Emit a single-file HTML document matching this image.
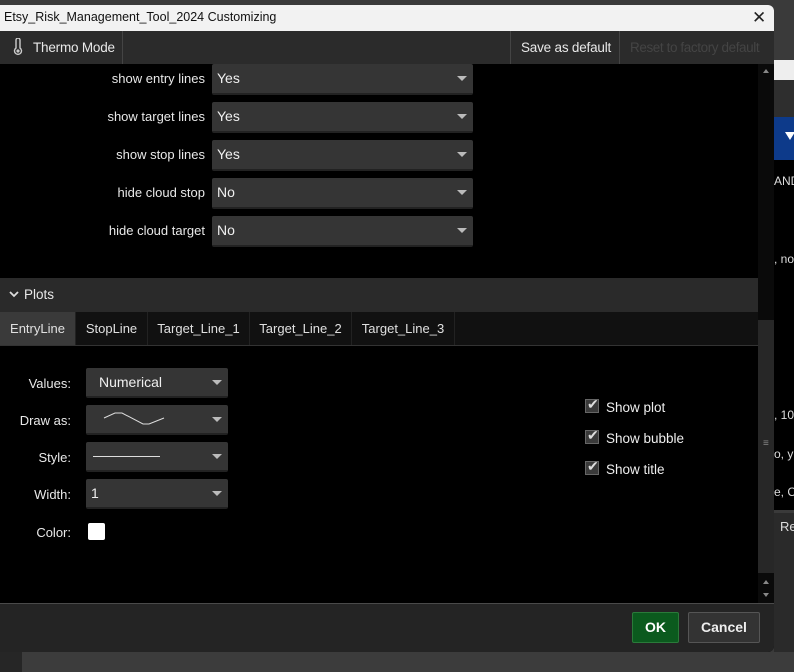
<!DOCTYPE html>
<html><head><style>
*{margin:0;padding:0;box-sizing:border-box}
body{width:794px;height:672px;overflow:hidden;background:#3a3a3a;font-family:"Liberation Sans",Arial,sans-serif;font-size:13px;color:#e8e8e8;position:relative}
.a{position:absolute;white-space:nowrap}
.dd{position:absolute;background:#353535;border-bottom:2px solid #222;border-radius:2px;color:#f0f0f0;font-size:14px;line-height:29px;padding-left:5px}
.dd:after{content:"";position:absolute;right:6px;top:12px;border-left:5px solid transparent;border-right:5px solid transparent;border-top:5px solid #bbb}
.lbl{position:absolute;text-align:right;font-size:13px;color:#e8e8e8}
.tab{position:absolute;top:312px;height:33px;line-height:33px;text-align:center;background:#111;color:#e0e0e0;font-size:13px;border-right:1px solid #222}
.cb{position:absolute;left:585px;width:14px;height:14px;background:#3a3a3a;border:1px solid #666}
.cb:after{content:"✔";position:absolute;left:1px;top:-4px;font-size:14px;color:#ddd}
.ct{position:absolute;left:606px;font-size:13.5px;color:#eee}
</style></head><body>
<div class="a" style="left:774px;top:0;width:20px;height:60px;background:#3a3a3a"></div>
<div class="a" style="left:774px;top:60px;width:20px;height:20px;background:#eee"></div>
<div class="a" style="left:774px;top:80px;width:20px;height:37px;background:#2e2e2e"></div>
<div class="a" style="left:774px;top:117px;width:20px;height:43px;background:#0d3a8a"></div>
<div class="a" style="left:785px;top:132px;border-left:5px solid transparent;border-right:5px solid transparent;border-top:8px solid #fff"></div>
<div class="a" style="left:774px;top:160px;width:20px;height:350px;background:#000;overflow:hidden"></div>
<div class="a" style="left:774px;top:174px;width:20px;overflow:hidden;color:#ddd;font-size:12px">AND</div>
<div class="a" style="left:774px;top:252px;width:20px;overflow:hidden;color:#ddd;font-size:12px">, no</div>
<div class="a" style="left:774px;top:408px;width:20px;overflow:hidden;color:#ddd;font-size:12px">, 10</div>
<div class="a" style="left:774px;top:447px;width:20px;overflow:hidden;color:#ddd;font-size:12px">o, y</div>
<div class="a" style="left:774px;top:485px;width:20px;overflow:hidden;color:#ddd;font-size:12px">e, C</div>
<div class="a" style="left:774px;top:513px;width:20px;height:28px;background:#2a2a2a;color:#ddd;font-size:13px;line-height:28px;padding-left:6px;overflow:hidden">Re</div>
<div class="a" style="left:774px;top:541px;width:20px;height:111px;background:#2a2a2a"></div>
<div class="a" style="left:0;top:652px;width:794px;height:20px;background:#3c3c3c"></div>
<div class="a" style="left:0;top:652px;width:22px;height:20px;background:#262626"></div>

<div class="a" style="left:0;top:5px;width:774px;height:647px;background:#000;border-radius:0 6px 6px 0;overflow:hidden">
 <div class="a" style="left:0;top:0;width:774px;height:26px;background:#f2f2f2;color:#111;font-size:12.5px;line-height:25px;padding-left:4px">Etsy_Risk_Management_Tool_2024 Customizing</div>
 <div class="a" style="left:752px;top:3px;color:#222;font-size:17px">✕</div>
 <div class="a" style="left:0;top:26px;width:774px;height:33px;background:#2b2b2b"></div>
 <div class="a" style="left:122px;top:26px;width:1px;height:33px;background:#444"></div>
 <div class="a" style="left:510px;top:26px;width:1px;height:33px;background:#444"></div>
 <div class="a" style="left:619px;top:26px;width:1px;height:33px;background:#444"></div>
 <svg class="a" style="left:13px;top:33px" width="10" height="18" viewBox="0 0 10 18"><path d="M3 2a2 2 0 0 1 4 0v8a3.5 3.5 0 1 1-4 0z" fill="none" stroke="#ccc" stroke-width="1.4"/><circle cx="5" cy="13" r="1.6" fill="#ccc"/></svg>
 <div class="a" style="left:33px;top:35px;font-size:13.5px;letter-spacing:-0.2px;color:#e8e8e8">Thermo Mode</div>
 <div class="a" style="left:521px;top:35px;font-size:13.5px;letter-spacing:-0.2px;color:#e8e8e8">Save as default</div>
 <div class="a" style="left:630px;top:35px;font-size:13.5px;letter-spacing:-0.4px;color:#444">Reset to factory default</div>

 <div class="lbl" style="left:0;width:205px;top:66px">show entry lines</div>
 <div class="dd" style="left:212px;top:59px;width:261px;height:31px">Yes</div>
 <div class="lbl" style="left:0;width:205px;top:104px">show target lines</div>
 <div class="dd" style="left:212px;top:97px;width:261px;height:31px">Yes</div>
 <div class="lbl" style="left:0;width:205px;top:142px">show stop lines</div>
 <div class="dd" style="left:212px;top:135px;width:261px;height:31px">Yes</div>
 <div class="lbl" style="left:0;width:205px;top:180px">hide cloud stop</div>
 <div class="dd" style="left:212px;top:173px;width:261px;height:31px">No</div>
 <div class="lbl" style="left:0;width:205px;top:218px">hide cloud target</div>
 <div class="dd" style="left:212px;top:211px;width:261px;height:31px">No</div>

 <div class="a" style="left:0;top:273px;width:758px;height:34px;background:#2a2a2a"></div>
 <svg class="a" style="left:9px;top:286px" width="10" height="8"><path d="M1 1l4 4 4-4" fill="none" stroke="#ddd" stroke-width="1.8"/></svg>
 <div class="a" style="left:24px;top:282px;font-size:13.5px;color:#e8e8e8">Plots</div>

 <div class="a" style="left:0;top:307px;width:758px;height:34px;background:#111;border-bottom:1px solid #333"></div>
</div>
<div class="tab" style="left:0;width:76px;background:#3a3a3a">EntryLine</div>
<div class="tab" style="left:76px;width:72px">StopLine</div>
<div class="tab" style="left:148px;width:102px">Target_Line_1</div>
<div class="tab" style="left:250px;width:102px">Target_Line_2</div>
<div class="tab" style="left:352px;width:103px">Target_Line_3</div>

<div class="lbl" style="left:0;width:71px;top:376px">Values:</div>
<div class="dd" style="left:86px;top:368px;width:142px;height:30px;padding-left:13px;line-height:28px">Numerical</div>
<div class="lbl" style="left:0;width:71px;top:413px">Draw as:</div>
<div class="dd" style="left:86px;top:405px;width:142px;height:30px"><svg class="a" style="left:17px;top:6px" width="64" height="16"><path d="M1 7L12 2H19L40 13H46L61 7" fill="none" stroke="#ddd" stroke-width="1"/></svg></div>
<div class="lbl" style="left:0;width:71px;top:450px">Style:</div>
<div class="dd" style="left:86px;top:442px;width:142px;height:30px"><div class="a" style="left:7px;top:14px;width:67px;height:1px;background:#ddd"></div></div>
<div class="lbl" style="left:0;width:71px;top:487px">Width:</div>
<div class="dd" style="left:86px;top:479px;width:142px;height:30px;line-height:28px">1</div>
<div class="lbl" style="left:0;width:71px;top:525px">Color:</div>
<div class="a" style="left:88px;top:523px;width:17px;height:17px;background:#fff;border-radius:2px"></div>

<div class="cb" style="top:399px"></div><div class="ct" style="top:400px">Show plot</div>
<div class="cb" style="top:430px"></div><div class="ct" style="top:431px">Show bubble</div>
<div class="cb" style="top:461px"></div><div class="ct" style="top:462px">Show title</div>

<div class="a" style="left:758px;top:64px;width:16px;height:539px;background:#0a0a0a"></div>
<div class="a" style="left:758px;top:320px;width:16px;height:253px;background:#272727"></div>
<div class="a" style="left:763px;top:69px;border-left:3px solid transparent;border-right:3px solid transparent;border-bottom:4px solid #888"></div>
<div class="a" style="left:763px;top:438px;color:#888;font-size:10px">≡</div>
<div class="a" style="left:763px;top:580px;border-left:3px solid transparent;border-right:3px solid transparent;border-bottom:4px solid #888"></div>
<div class="a" style="left:763px;top:593px;border-left:3px solid transparent;border-right:3px solid transparent;border-top:4px solid #888"></div>

<div class="a" style="left:0;top:603px;width:774px;height:49px;background:#242424;border-top:1px solid #4a4a4a;border-radius:0 0 6px 0"></div>
<div class="a" style="left:632px;top:612px;width:47px;height:31px;background:#0b5a1e;border:1px solid #2a7a3a;border-radius:2px;color:#fff;font-weight:bold;font-size:14px;text-align:center;line-height:29px">OK</div>
<div class="a" style="left:688px;top:612px;width:72px;height:31px;background:#333;border:1px solid #555;border-radius:2px;color:#eee;font-weight:bold;font-size:14px;text-align:center;line-height:29px">Cancel</div>
</body></html>
